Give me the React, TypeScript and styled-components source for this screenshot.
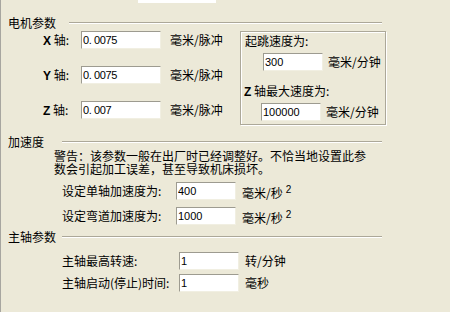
import React from "react";
import styled, { createGlobalStyle } from "styled-components";

const CJK = `"Noto Sans CJK SC", "Liberation Sans", sans-serif`;
const LATIN = `"Liberation Sans", "Noto Sans CJK SC", sans-serif`;

const Global = createGlobalStyle`
  html, body { margin: 0; padding: 0; background: #ece9d8; }
  body { font-family: ${CJK}; font-size: 12px; color: #000; }
`;

const Page = styled.div`
  width: 450px;
  height: 312px;
  box-sizing: border-box;
  border-left: 1px solid #a7a6a0;
  padding-left: 7px;
  overflow: hidden;
  display: flex;
  flex-direction: column;
  font-family: ${CJK};
  font-size: 12px;
  line-height: 14px;
  color: #000;
  background: #ece9d8;
`;

const TopStub = styled.div`
  margin-left: 130px;
  width: 78px;
  height: 3px;
  background: #fff;
`;

const SectionHeader = styled.div<{ $lineStart: number; $top: number }>`
  display: grid;
  grid-template-columns: ${(p) => p.$lineStart - 8}px ${(p) => 382 - p.$lineStart}px;
  align-items: center;
  height: 14px;
  margin-top: ${(p) => p.$top}px;
  white-space: nowrap;
`;

const EtchedLine = styled.div`
  height: 0;
  border-top: 1px solid #aca899;
  border-bottom: 1px solid #fff;
`;

const MotorBlock = styled.div`
  display: flex;
  align-items: flex-start;
  margin-top: 1px;
`;

const AxisColumn = styled.div`
  width: 232px;
  display: flex;
  flex-direction: column;
  gap: 17px;
`;

const AxisRow = styled.div`
  display: grid;
  grid-template-columns: 64px 80px auto;
  column-gap: 9px;
  align-items: center;
  height: 18px;
`;

const AxisLabel = styled.div`
  padding-left: 35px;
  white-space: pre;
`;

const Bold = styled.span`
  font-family: ${LATIN};
  font-weight: bold;
`;

const Field = styled.input<{ $w: number; $mono?: boolean }>`
  width: ${(p) => p.$w}px;
  height: 18px;
  box-sizing: border-box;
  margin: 0;
  padding: 0 0 0 1px;
  border-style: solid;
  border-width: 1px;
  border-color: #9d9b90 #f1efe2 #f1efe2 #9d9b90;
  background: #fff;
  color: #000;
  font-family: ${LATIN};
  font-size: 11px;
  letter-spacing: ${(p) => (p.$mono ? "-0.4px" : "0")};
  outline: none;
`;

const Unit = styled.span`
  white-space: nowrap;
`;

const GroupBox = styled.div`
  width: 146px;
  height: 94px;
  box-sizing: border-box;
  border: 1px solid #aca899;
  box-shadow: inset 1px 1px 0 #fff, 1px 1px 0 #fff;
  padding: 2px 0 0 4px;
  display: flex;
  flex-direction: column;
`;

const BoxLabel = styled.div<{ $top: number; $shift?: number }>`
  margin-top: ${(p) => p.$top}px;
  margin-left: ${(p) => p.$shift ?? 0}px;
  white-space: nowrap;
`;

const BoxRow = styled.div<{ $top: number; $indent: number }>`
  display: flex;
  align-items: center;
  gap: 5px;
  margin-top: ${(p) => p.$top}px;
  margin-left: ${(p) => p.$indent}px;
`;

const Warning = styled.p`
  margin: 0;
  padding-left: 46px;
  width: 318px;
  line-height: 13px;
`;

const ParamRow = styled.div<{ $label: number; $top: number }>`
  display: grid;
  grid-template-columns: ${(p) => p.$label}px 60px auto;
  column-gap: 6px;
  align-items: center;
  margin-left: 54px;
  margin-top: ${(p) => p.$top}px;
  height: 18px;
  white-space: nowrap;
`;

const Sup = styled.span`
  font-family: ${LATIN};
  font-size: 10px;
  margin-left: 3px;
  vertical-align: 5px;
`;

const axes = [
  { name: "X", value: "0. 0075" },
  { name: "Y", value: "0. 0075" },
  { name: "Z", value: "0. 007" },
];

export default function App() {
  return (
    <>
      <Global />
      <Page>
        <TopStub />
        <SectionHeader $lineStart={69} $top={13}>
          <span>电机参数</span>
          <EtchedLine />
        </SectionHeader>
        <MotorBlock>
          <AxisColumn>
            {axes.map((a) => (
              <AxisRow key={a.name}>
                <AxisLabel>
                  <Bold>{a.name}</Bold> 轴:
                </AxisLabel>
                <Field $w={80} $mono readOnly value={a.value} />
                <Unit>毫米/脉冲</Unit>
              </AxisRow>
            ))}
          </AxisColumn>
          <GroupBox>
            <BoxLabel $top={0}>起跳速度为:</BoxLabel>
            <BoxRow $top={5} $indent={18}>
              <Field $w={60} readOnly value="300" />
              <Unit>毫米/分钟</Unit>
            </BoxRow>
            <BoxLabel $top={13} $shift={-1}>
              <Bold>Z</Bold> 轴最大速度为:
            </BoxLabel>
            <BoxRow $top={4} $indent={16}>
              <Field $w={60} readOnly value="100000" />
              <Unit>毫米/分钟</Unit>
            </BoxRow>
          </GroupBox>
        </MotorBlock>

        <SectionHeader $lineStart={62} $top={10}>
          <span>加速度</span>
          <EtchedLine />
        </SectionHeader>
        <Warning>
          警告：该参数一般在出厂时已经调整好。不恰当地设置此参数会引起加工误差，甚至导致机床损坏。
        </Warning>
        <ParamRow $label={108} $top={7}>
          <span>设定单轴加速度为:</span>
          <Field $w={60} readOnly value="400" />
          <Unit>
            毫米/秒<Sup>2</Sup>
          </Unit>
        </ParamRow>
        <ParamRow $label={108} $top={7}>
          <span>设定弯道加速度为:</span>
          <Field $w={60} readOnly value="1000" />
          <Unit>
            毫米/秒<Sup>2</Sup>
          </Unit>
        </ParamRow>

        <SectionHeader $lineStart={62} $top={5}>
          <span>主轴参数</span>
          <EtchedLine />
        </SectionHeader>
        <ParamRow $label={111} $top={8}>
          <span>主轴最高转速:</span>
          <Field $w={60} readOnly value="1" />
          <Unit>转/分钟</Unit>
        </ParamRow>
        <ParamRow $label={111} $top={4}>
          <span>主轴启动(停止)时间:</span>
          <Field $w={60} readOnly value="1" />
          <Unit>毫秒</Unit>
        </ParamRow>
      </Page>
    </>
  );
}
